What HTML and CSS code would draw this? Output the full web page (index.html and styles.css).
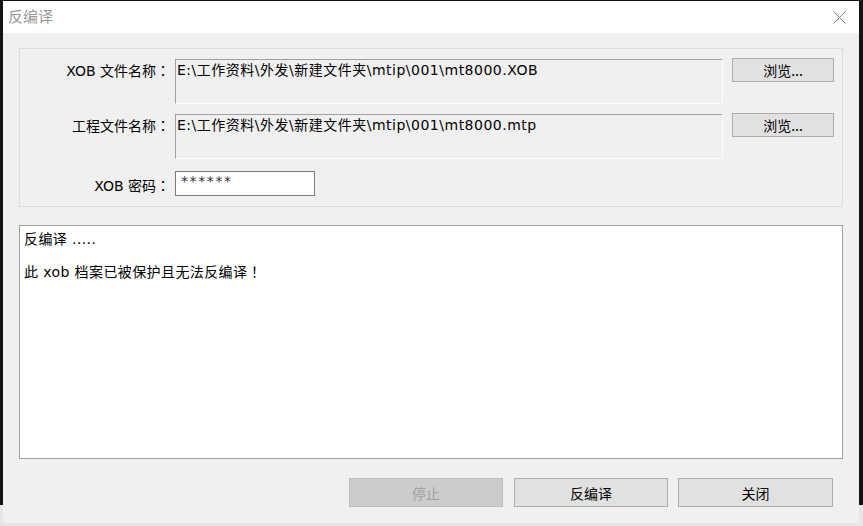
FILE: index.html
```html
<!DOCTYPE html>
<html lang="zh-CN">
<head>
<meta charset="utf-8">
<title>反编译</title>
<link rel="stylesheet" href="styles.css">
</head>
<body>
<div class="window">
  <div class="titlebar">
    <span class="title">反编译</span>
    <span class="close">
      <svg width="13" height="13" viewBox="0 0 13 13"><path d="M0.5 0.5L12.5 12.5M12.5 0.5L0.5 12.5" stroke="#7a7a7a" stroke-width="1" fill="none"/></svg>
    </span>
  </div>
  <div class="content">
    <div class="group">
      <div class="row row-file">
        <div class="label">XOB 文件名称<span class="fw" lang="ja">：</span></div>
        <div class="field">E:\工作资料\外发\新建文件夹\mtip\001\mt8000.XOB</div>
        <button class="btn btn-browse">浏览...</button>
      </div>
      <div class="row row-file">
        <div class="label">工程文件名称<span class="fw" lang="ja">：</span></div>
        <div class="field">E:\工作资料\外发\新建文件夹\mtip\001\mt8000.mtp</div>
        <button class="btn btn-browse">浏览...</button>
      </div>
      <div class="row row-pwd">
        <div class="label">XOB 密码<span class="fw" lang="ja">：</span></div>
        <div class="pwd">******</div>
      </div>
    </div>
    <div class="log">
      <div class="line">反编译 .....</div>
      <div class="line"></div>
      <div class="line">此 xob 档案已被保护且无法反编译<span class="fw" lang="ja">！</span></div>
    </div>
    <div class="actions">
      <button class="btn btn-action btn-stop" disabled>停止</button>
      <button class="btn btn-action">反编译</button>
      <button class="btn btn-action btn-close">关闭</button>
    </div>
  </div>
</div>
</body>
</html>
```

FILE: styles.css
```css
html, body {
  margin: 0;
  padding: 0;
}
body {
  width: 863px;
  height: 526px;
  overflow: hidden;
  background: linear-gradient(#141414 0, #141414 505px, #e6e6e6 505px);
  font-family: "DejaVu Sans", "Noto Sans CJK SC", sans-serif;
  font-size: 14px;
  color: #000;
}
.fw {
  font-family: "Noto Sans CJK JP", sans-serif;
}
.window {
  margin: 1px 0 0 3px;
  width: 856px;
  height: 522px;
  display: flex;
  flex-direction: column;
  background: #f0f0f0;
}
.titlebar {
  height: 32px;
  background: #fff;
  display: flex;
  align-items: center;
  justify-content: space-between;
  padding: 0 13px 0 5px;
}
.title {
  font-family: "Noto Sans CJK SC", sans-serif;
  font-size: 15px;
  color: #999;
  line-height: 32px;
  margin-top: -2px;
}
.close {
  display: flex;
  margin-top: 1px;
}
.content {
  flex: 1;
  display: flex;
  flex-direction: column;
  padding: 15px 16px 16px 16px;
}
.group {
  height: 159px;
  box-sizing: border-box;
  border: 1px solid #dcdcdc;
  padding: 10px 8px 0 0;
  display: flex;
  flex-direction: column;
}
.row {
  display: grid;
  align-items: start;
}
.row-file {
  grid-template-columns: 150px 553px 111px;
  height: 45px;
  margin-bottom: 10px;
}
.row-pwd {
  margin-top: 2px;
  grid-template-columns: 150px 145px;
}
.label {
  text-align: right;
  padding-top: 2px;
  line-height: 18px;
  white-space: nowrap;
}
.field {
  margin-left: 5px;
  box-sizing: border-box;
  width: 548px;
  height: 45px;
  border-top: 1px solid #a0a0a0;
  border-left: 1px solid #a0a0a0;
  border-right: 1px solid #fdfdfd;
  border-bottom: 1px solid #fdfdfd;
  background: #f0f0f0;
  padding: 1px 1px;
  line-height: 18px;
  letter-spacing: 0.5px;
  white-space: nowrap;
  overflow: hidden;
}
.btn {
  font: inherit;
  font-family: "Noto Sans CJK SC", sans-serif;
  font-size: 14px;
  background: #e1e1e1;
  border: 1px solid #adadad;
  color: #000;
  padding: 0;
  margin: 0;
  box-sizing: border-box;
}
.btn-browse {
  width: 102px;
  height: 24px;
  margin: -1px 0 0 9px;
  line-height: 20px;
}
.pwd {
  margin-left: 5px;
  box-sizing: border-box;
  width: 140px;
  height: 25px;
  background: #fff;
  border: 1px solid #7a7a7a;
  padding: 1px 5px;
  font-size: 14px;
  line-height: 16px;
  letter-spacing: 1.6px;
  color: #333;
}
.row-pwd .label {
  padding-top: 5px;
}
.log {
  margin-top: 18px;
  height: 234px;
  box-sizing: border-box;
  background: #fff;
  border: 1px solid #a0a0a0;
  padding: 5px 4px;
}
.line {
  height: 16px;
  line-height: 16px;
  white-space: nowrap;
  letter-spacing: 0.4px;
}
.actions {
  margin-top: 19px;
  display: flex;
  justify-content: flex-end;
  gap: 10px;
  padding-right: 10px;
}
.btn-action {
  width: 154px;
  height: 29px;
}
.btn-stop {
  margin-right: 1px;
}
.btn-close {
  width: 155px;
}
.btn-action:disabled {
  background: #cccccc;
  border-color: #bfbfbf;
  color: #a0a0a0;
}
```
